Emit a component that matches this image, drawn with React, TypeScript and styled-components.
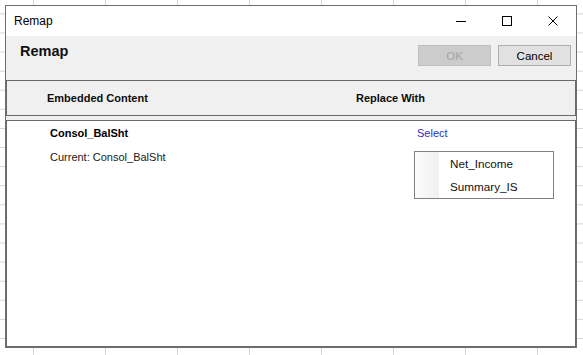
import React from 'react'
import styled, { createGlobalStyle } from 'styled-components'

const GlobalStyle = createGlobalStyle`
  html, body {
    margin: 0;
    padding: 0;
  }
  body {
    font-family: 'Liberation Sans', Arial, sans-serif;
    color: #000;
    background: #fff;
  }
`

// spreadsheet grid that shows around the dialog
const Desktop = styled.div`
  width: 583px;
  height: 355px;
  box-sizing: border-box;
  padding: 5px 0 0 5px;
  overflow: hidden;
  background-color: #ffffff;
  background-image:
    linear-gradient(to right, #d4d4d4 1px, transparent 1px),
    linear-gradient(to bottom, #d4d4d4 1px, transparent 1px);
  background-size: 72px 100%, 100% 19.1px;
  background-position: 33px 0, 0 13.4px;
`

const Window = styled.div`
  width: 572px;
  height: 343px;
  box-sizing: border-box;
  border: 1px solid #6f6f6f;
  background: #f0f0f0;
  display: flex;
  flex-direction: column;
`

const TitleBar = styled.div`
  height: 30px;
  flex-shrink: 0;
  display: flex;
  align-items: center;
  background: #ffffff;
`

const Title = styled.span`
  flex: 1;
  padding-left: 8px;
  font-size: 12px;
`

const CaptionButton = styled.div`
  width: 46px;
  height: 30px;
  display: flex;
  align-items: center;
  justify-content: center;
`

const TopPanel = styled.div`
  height: 44px;
  flex-shrink: 0;
  box-sizing: border-box;
  display: flex;
  align-items: flex-start;
  padding: 7px 5px 0 14px;
`

const Heading = styled.h1`
  flex: 1;
  margin: 0;
  font-size: 14.5px;
  line-height: 16px;
  font-weight: bold;
  color: #111;
`

const Buttons = styled.div`
  display: flex;
  gap: 7px;
  margin-top: 2px;
`

const Button = styled.button<{ $disabled?: boolean }>`
  width: 73px;
  height: 21px;
  box-sizing: border-box;
  padding: 0;
  font-family: 'Liberation Sans', Arial, sans-serif;
  font-size: 11.5px;
  border: 1px solid ${p => (p.$disabled ? '#bfbfbf' : '#adadad')};
  background: ${p => (p.$disabled ? '#cccccc' : '#e1e1e1')};
  color: ${p => (p.$disabled ? '#a3a3a3' : '#000')};
`

const HeaderBand = styled.div`
  height: 36px;
  flex-shrink: 0;
  box-sizing: border-box;
  border: 1px solid #6a6a6a;
  display: grid;
  grid-template-columns: 309px 1fr;
  align-items: center;
  padding-left: 40px;
  font-size: 11px;
  font-weight: bold;
  color: #0d0d0d;
`

const ContentBox = styled.div`
  flex: 1;
  margin-top: 4px;
  border: 1px solid #6a6a6a;
  background: #ffffff;
`

const Row = styled.div`
  display: grid;
  grid-template-columns: 367px 1fr;
  padding: 6px 0 0 43px;
  font-size: 11px;
  line-height: 13px;
`

const Name = styled.div`
  font-weight: bold;
`

const Current = styled.div`
  margin-top: 11px;
  color: #1a1a1a;
`

const ReplaceCell = styled.div`
  position: relative;
`

const SelectLink = styled.span`
  color: #2f2fc4;
`

const Menu = styled.div`
  position: absolute;
  left: -3px;
  top: 24px;
  width: 140px;
  height: 48px;
  box-sizing: border-box;
  border: 1px solid #828282;
  background: #ffffff;
  &::before {
    content: '';
    position: absolute;
    left: 0;
    top: 0;
    bottom: 0;
    width: 24px;
    background: linear-gradient(to right, #fcfcfc, #f0f0f0);
  }
`

const MenuItem = styled.div`
  position: relative;
  height: 23px;
  display: flex;
  align-items: center;
  padding-left: 35px;
  font-size: 11.7px;
  color: #111;
`

const App: React.FC = () => (
  <>
    <GlobalStyle />
    <Desktop>
      <Window>
        <TitleBar>
          <Title>Remap</Title>
          <CaptionButton>
            <svg width="10" height="10" viewBox="0 0 10 10">
              <line x1="0" y1="5.5" x2="10" y2="5.5" stroke="#000" strokeWidth="1" />
            </svg>
          </CaptionButton>
          <CaptionButton>
            <svg width="10" height="10" viewBox="0 0 10 10">
              <rect x="0.5" y="0.5" width="9" height="9" fill="none" stroke="#000" strokeWidth="1" />
            </svg>
          </CaptionButton>
          <CaptionButton>
            <svg width="10" height="10" viewBox="0 0 10 10">
              <path d="M0.5 0.5 L9.5 9.5 M9.5 0.5 L0.5 9.5" stroke="#000" strokeWidth="1" />
            </svg>
          </CaptionButton>
        </TitleBar>
        <TopPanel>
          <Heading>Remap</Heading>
          <Buttons>
            <Button $disabled>OK</Button>
            <Button>Cancel</Button>
          </Buttons>
        </TopPanel>
        <HeaderBand>
          <span>Embedded Content</span>
          <span>Replace With</span>
        </HeaderBand>
        <ContentBox>
          <Row>
            <div>
              <Name>Consol_BalSht</Name>
              <Current>Current: Consol_BalSht</Current>
            </div>
            <ReplaceCell>
              <SelectLink>Select</SelectLink>
              <Menu>
                <MenuItem>Net_Income</MenuItem>
                <MenuItem>Summary_IS</MenuItem>
              </Menu>
            </ReplaceCell>
          </Row>
        </ContentBox>
      </Window>
    </Desktop>
  </>
)

export default App
